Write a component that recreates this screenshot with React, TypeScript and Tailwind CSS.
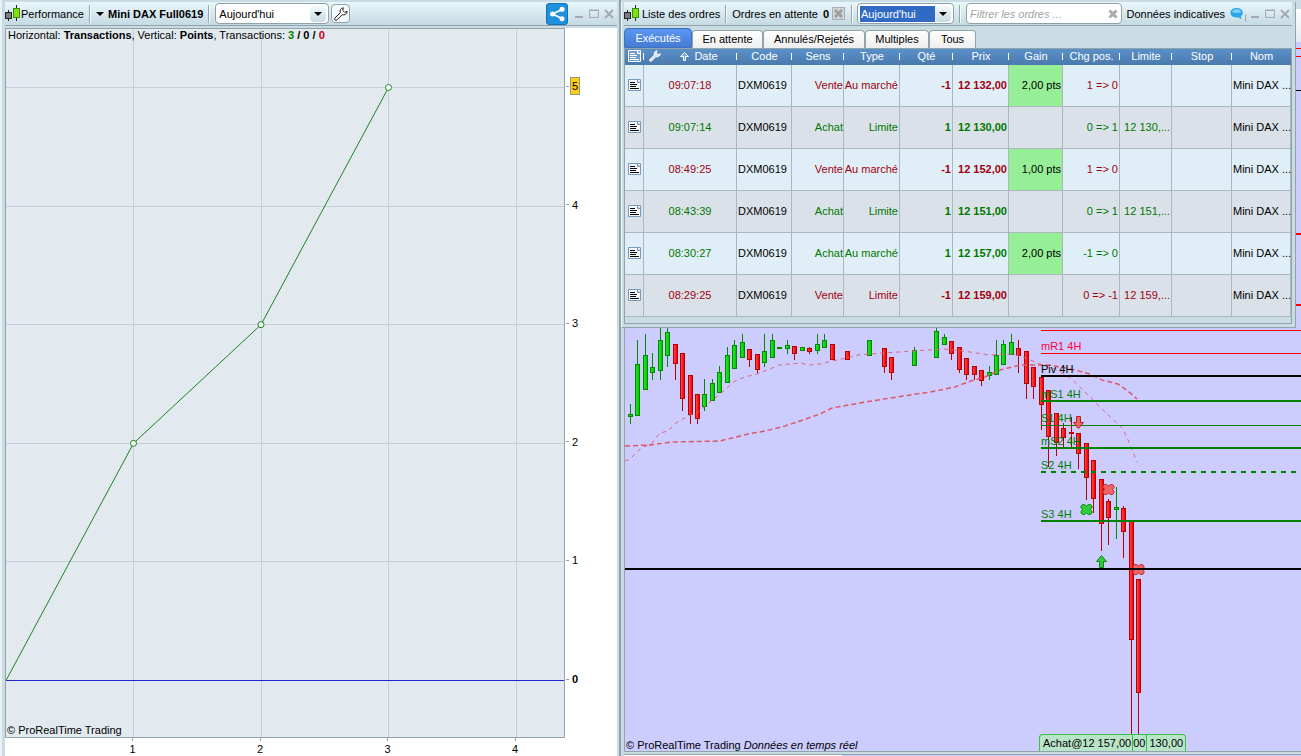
import React from "react";

type Candle = [x: number, high: number, top: number, bottom: number, low: number, up: 0 | 1];

const candles: Candle[] = [
  [630, 404, 414, 417, 424, 1],
  [637, 340, 364, 416, 416, 1],
  [645, 334, 355, 390, 390, 1],
  [652, 353, 367, 373, 380, 1],
  [660, 328, 340, 371, 380, 1],
  [667, 328, 332, 356, 367, 1],
  [675, 344, 344, 364, 380, 0],
  [682, 353, 353, 399, 411, 0],
  [690, 375, 375, 415, 424, 0],
  [697, 394, 394, 419, 424, 0],
  [704, 379, 394, 407, 411, 1],
  [712, 379, 383, 401, 401, 1],
  [719, 366, 372, 393, 393, 1],
  [727, 347, 355, 383, 383, 1],
  [734, 340, 345, 369, 369, 1],
  [742, 334, 342, 358, 358, 1],
  [749, 349, 349, 360, 367, 0],
  [757, 354, 354, 370, 373, 0],
  [764, 334, 351, 363, 367, 1],
  [772, 334, 340, 358, 358, 1],
  [779, 347, 347, 349, 349, 1],
  [787, 340, 345, 349, 354, 1],
  [794, 346, 346, 354, 360, 0],
  [802, 347, 347, 351, 351, 1],
  [809, 347, 348, 352, 354, 0],
  [817, 334, 344, 351, 354, 1],
  [824, 334, 340, 348, 348, 1],
  [832, 344, 344, 360, 360, 0],
  [847, 351, 351, 360, 360, 0],
  [869, 340, 340, 356, 356, 1],
  [884, 348, 348, 367, 373, 0],
  [891, 357, 357, 373, 380, 0],
  [914, 347, 350, 366, 366, 1],
  [936, 328, 331, 358, 358, 1],
  [944, 334, 337, 345, 345, 1],
  [951, 341, 341, 354, 360, 0],
  [959, 347, 347, 370, 373, 0],
  [966, 358, 358, 375, 380, 0],
  [974, 366, 366, 375, 380, 0],
  [981, 370, 370, 381, 386, 0],
  [989, 366, 372, 376, 380, 1],
  [996, 340, 355, 375, 375, 1],
  [1003, 340, 344, 365, 365, 1],
  [1011, 334, 342, 355, 355, 1],
  [1018, 340, 348, 356, 373, 0],
  [1026, 351, 351, 384, 399, 0],
  [1033, 367, 367, 387, 399, 0],
  [1041, 377, 377, 405, 430, 0],
  [1048, 390, 390, 437, 467, 0],
  [1056, 413, 413, 443, 456, 0],
  [1063, 423, 428, 438, 447, 0],
  [1071, 417, 432, 434, 447, 0],
  [1078, 433, 433, 454, 469, 0],
  [1086, 443, 443, 478, 500, 0],
  [1093, 460, 460, 499, 513, 0],
  [1101, 479, 479, 524, 551, 0],
  [1108, 499, 501, 518, 545, 0],
  [1116, 487, 507, 510, 539, 1],
  [1123, 506, 508, 532, 558, 0],
  [1131, 521, 521, 640, 735, 0],
  [1138, 579, 579, 693, 735, 0],
];

const fastAverage =
  "625,461 630,459 640,449 652,443 660,433 668,431 676,423 690,415 697,413 710,402 720,394 735,381 745,377 757,374 770,369 779,365 800,363 810,365 820,364 832,361 847,358 858,355 884,353 914,351 944,349 970,352 989,355 1011,354 1023,357 1040,364 1055,369 1070,378 1078,385 1093,400 1105,412 1118,424 1123,429 1129,442 1137,462";
const slowAverage =
  "625,446 650,445 672,442 720,441 748,434 765,431 785,426 800,421 820,414 832,408 860,403 890,398 930,392 955,387 968,382 985,377 1000,370 1020,365 1050,365 1075,370 1090,374 1102,380 1118,384 1128,391 1137,399";

const levels = [
  { name: "", y: 48, h: 1, color: "#ff0000" },
  { name: "", y: 56, h: 1, color: "#ff0000" },
  { name: "", y: 90, h: 1, color: "#000000" },
  { name: "", y: 233, h: 2, color: "#ff0000" },
  { name: "", y: 304, h: 2, color: "#ff0000" },
  { name: "", y: 330, h: 1, color: "#ff0000" },
  { name: "mR1 4H", y: 353, h: 1, color: "#ff0000", text: "#ff0040" },
  { name: "Piv 4H", y: 375, h: 2, color: "#000000" },
  { name: "mS1 4H", y: 400, h: 2, color: "#008000" },
  { name: "S1 4H", y: 425, h: 1, color: "#008000" },
  { name: "mS2 4H", y: 447, h: 2, color: "#008000" },
  { name: "S2 4H", y: 471, h: 2, color: "#008000", dashed: true },
  { name: "S3 4H", y: 520, h: 2, color: "#008000" },
];

const orders = [
  ["09:07:18", "Vente", "Au marché", "-1", "12 132,00", "2,00 pts", "1 => 0", ""],
  ["09:07:14", "Achat", "Limite", "1", "12 130,00", "", "0 => 1", "12 130,..."],
  ["08:49:25", "Vente", "Au marché", "-1", "12 152,00", "1,00 pts", "1 => 0", ""],
  ["08:43:39", "Achat", "Limite", "1", "12 151,00", "", "0 => 1", "12 151,..."],
  ["08:30:27", "Achat", "Au marché", "1", "12 157,00", "2,00 pts", "-1 => 0", ""],
  ["08:29:25", "Vente", "Limite", "-1", "12 159,00", "", "0 => -1", "12 159,..."],
];

function CandleIcon() {
  return (
    <svg width="15" height="17" viewBox="0 0 15 17" className="shrink-0" aria-hidden="true">
      <path d="M3.5 5v11M11.5 0v16" stroke="#222" />
      <rect x="0.5" y="7.500" width="6" height="6" fill="#777c80" stroke="#222" />
      <rect x="8.500" y="3.500" width="6" height="9" fill="#80e010" stroke="#3a8a10" />
    </svg>
  );
}

function Separator() {
  return <span className="h-[18px] w-[2px] shrink-0 border-l border-[#93a5ad] bg-[#f4fbfd]" />;
}

function Wrench({ color, fill, size }: { color: string; fill: string; size: number }) {
  return (
    <svg width={size} height={size} viewBox="0 0 14 14" aria-hidden="true">
      <path
        d="M9.300.8a3.700 3.700 0 0 0-3 5L1 10.900a1.400 1.400 0 0 0 2 2l5.200-5.200a3.700 3.700 0 0 0 5-3.400l-2.500 1.100-1.900-1.900Z"
        fill={fill}
        stroke={color}
        strokeLinejoin="round"
      />
    </svg>
  );
}

function WindowButtons() {
  const cls = "flex h-4 w-[15px] items-center justify-center";
  return (
    <span className="flex shrink-0">
      <button className={cls} aria-label="Réduire">
        <svg width="10" height="10"><path d="M1 8h8" stroke="#a3abaf" strokeWidth="2" /></svg>
      </button>
      <button className={cls} aria-label="Agrandir">
        <svg width="10" height="10"><path d="M.5 1.500h9v7h-9ZM0 1h10" fill="none" stroke="#a3abaf" /></svg>
      </button>
      <button className={cls} aria-label="Fermer">
        <svg width="10" height="10"><path d="M1 1l8 8M9 1L1 9" stroke="#a3abaf" strokeWidth="2" /></svg>
      </button>
    </span>
  );
}

function PeriodSelect({ selected, className }: { selected?: boolean; className: string }) {
  return (
    <span className={"flex h-[21px] shrink-0 items-center rounded border border-[#8fa0a8] bg-white p-[2px] " + className}>
      <select
        aria-label="Période"
        className={
          "h-4 min-w-0 flex-1 appearance-none outline-none " +
          (selected ? "bg-[#316ac5] pl-px text-white" : "bg-white pl-px text-black")
        }
      >
        <option>Aujourd'hui</option>
        <option>Hier</option>
      </select>
      <span className="pointer-events-none flex h-4 w-4 items-center justify-center rounded-sm bg-linear-to-b from-[#f3f9fb] to-[#c8dbe3]">
        <svg width="8" height="4"><path d="M0 0h8L4 4Z" fill="#000" /></svg>
      </span>
    </span>
  );
}

function DocIcon({ header }: { header?: boolean }) {
  const edge = header ? "#ffffff" : "#7898bd";
  return (
    <svg width="13" height="12" viewBox="0 0 13 12" className="mx-auto block" aria-label="Note" role="img">
      <path d="M.5.5h12v11H.5Z" fill={header ? "#6f9ccb" : "#f8fbff"} stroke={edge} />
      <path d="M9.500.5v3h3" fill="#b8cce2" stroke={edge} />
      <path d="M2 3.500h5M2 5.500h7M2 7.500h6M2 9.500h9" stroke={header ? "#fff" : "#000"} />
    </svg>
  );
}

function PerformanceChart() {
  const yValues = [5, 4, 3, 2, 1, 0];
  const yAt = (v: number) => 651.5 - v * 118.6;
  const xAt = (v: number) => v * 127.5;
  const points = [[0, 0], [1, 2], [2, 3], [3, 5]];
  return (
    <div className="grid min-h-0 flex-1 grid-cols-[1fr_52px] grid-rows-[1fr_18px] bg-white">
      <div className="relative border border-[#92a4ab] bg-[#e2eaf0]">
        <svg className="absolute inset-0 h-full w-full" viewBox="0 0 558 708" preserveAspectRatio="none" aria-label="Performance en points">
          {[1, 2, 3, 4].map((v) => (
            <path key={v} d={`M${Math.floor(xAt(v)) + 0.5} 0V708`} stroke="#c3d1d6" />
          ))}
          {[1, 2, 3, 4, 5].map((v) => (
            <path key={v} d={`M0 ${Math.floor(yAt(v)) + 0.5}H558`} stroke="#c3d1d6" />
          ))}
          <path d="M0 651.5H558" stroke="#2424d6" />
          <polyline points={points.map(([x, y]) => `${xAt(x)},${yAt(y)}`).join(" ")} fill="none" stroke="#1c8420" />
          {points.slice(1).map(([x, y]) => (
            <circle key={x} cx={xAt(x)} cy={yAt(y)} r="3" fill="#fff" stroke="#1c8420" />
          ))}
        </svg>
        <div className="relative pl-[2px] leading-[13px]">
          Horizontal: <b>Transactions</b>, Vertical: <b>Points</b>, Transactions:{" "}
          <b><span className="text-[#008000]">3</span> / 0 / <span className="text-[#c00020]">0</span></b>
        </div>
        <div className="absolute bottom-0 left-px leading-[13px]">© ProRealTime Trading</div>
      </div>
      <div className="relative">
        {yValues.map((v) => (
          <div
            key={v}
            className="absolute left-px flex -translate-y-1/2 items-center gap-px leading-4"
            style={{ top: `${((yAt(v) - 0.5) / 710) * 100}%` }}
          >
            <span className="h-px w-[3px] bg-[#92a4ab]" />
            <span className={v === 5 ? "border border-[#8c9a80] bg-[#ffcc10] px-px" : v === 0 ? "px-[2px] font-bold" : "px-[2px]"}>{v}</span>
          </div>
        ))}
      </div>
      <div className="relative">
        {[1, 2, 3, 4].map((v) => (
          <div
            key={v}
            className="absolute top-0 flex -translate-x-1/2 flex-col items-center leading-4"
            style={{ left: `${(xAt(v) / 560) * 100}%` }}
          >
            <span className="h-[3px] w-px bg-[#92a4ab]" />
            {v}
          </div>
        ))}
      </div>
    </div>
  );
}

function PerformancePanel() {
  return (
    <section className="flex min-w-0 flex-col border-x-2 border-l-[#e9f1f4] border-r-[#8fa3ab] bg-[#c9dbe3] pt-[2px] pr-[2px] pl-[3px]">
      <header className="mb-[2px] flex h-6 items-center border-b border-[#92a4ab] bg-linear-to-b from-[#e8f7fb] to-[#c6dae3] pr-px whitespace-nowrap">
        <CandleIcon />
        <span className="ml-px">Performance</span>
        <span className="ml-[5px] flex"><Separator /></span>
        <button className="ml-[5px] flex items-center gap-1 font-bold">
          <svg width="8" height="4"><path d="M0 0h8L4 4Z" fill="#000" /></svg>
          Mini DAX Full0619
        </button>
        <span className="mx-[5px] flex"><Separator /></span>
        <PeriodSelect className="w-[114px]" />
        <button aria-label="Réglages" className="ml-[2px] flex h-[19px] w-[19px] items-center justify-center rounded-sm border border-[#8fa0a8] bg-[#f4f8fa]">
          <Wrench color="#222" fill="#fff" size={14} />
        </button>
        <button aria-label="Partager" className="ml-auto flex h-[22px] w-[22px] items-center justify-center rounded-[3px] border border-[#1572b8] bg-[#1e90dc]">
          <svg width="16" height="16" viewBox="0 0 16 16">
            <path d="M13 3.500L3.500 8l9.500 4.500" fill="none" stroke="#fff" strokeWidth="1.800" />
            <circle cx="3.500" cy="8" r="2.500" fill="#fff" />
            <circle cx="13" cy="3.200" r="2.500" fill="#fff" />
            <circle cx="13" cy="12.800" r="2.500" fill="#fff" />
          </svg>
        </button>
        <span className="ml-[3px] flex"><WindowButtons /></span>
      </header>
      <PerformanceChart />
    </section>
  );
}

function Cross({ x, y, fill, stroke }: { x: number; y: number; fill: string; stroke: string }) {
  return (
    <path
      transform={`translate(${x + 0.5} ${y + 0.5})`}
      d="M-4-5h2L0-3.500 2-5h2l1.500 1.500v1.500L4 0l1.500 2v1.500L4 5H2L0 3.500-2 5h-2l-1.500-1.500V2L-4 0l-1.500-2v-1.500Z"
      fill={fill}
      stroke={stroke}
    />
  );
}

function MarketChart() {
  return (
    <div className="relative min-h-0 flex-1 overflow-hidden border-b border-l border-[#92a4ab] bg-[#ccccff]">
      <svg className="absolute inset-0 h-full w-full" aria-label="Mini DAX">
        <defs>
          <linearGradient id="down">
            <stop offset="0" stopColor="#ff4848" />
            <stop offset="1" stopColor="#f00000" />
          </linearGradient>
          <linearGradient id="up">
            <stop offset="0" stopColor="#28e428" />
            <stop offset="1" stopColor="#00c800" />
          </linearGradient>
        </defs>
        <svg x="-625" y="-42" width="100%" height="100%" overflow="visible">
          {candles.map(([x, high, top, bottom, low, up]) => {
            const stroke = up ? "#008a00" : "#b80000";
            const h = bottom - top;
            return (
              <g key={x}>
                <rect x={x} y={high} width="1" height={low - high} fill={stroke} />
                <rect x={x - 2} y={top} width="5" height={h} fill={stroke} />
                {h > 2 && <rect x={x - 1} y={top + 1} width="3" height={h - 2} fill={up ? "url(#up)" : "url(#down)"} />}
              </g>
            );
          })}
          <polyline points={fastAverage} fill="none" stroke="#dc6878" strokeDasharray="4 4" />
          <polyline points={slowAverage} fill="none" stroke="#dc5a64" strokeWidth="1.500" strokeDasharray="5 3" />
          {levels.map((l) => (
            <g key={l.y}>
              {l.dashed ? (
                <path d={`M1041 ${l.y + 1}H1297`} stroke={l.color} strokeWidth="2" strokeDasharray="5 5" />
              ) : (
                <rect x="1041" y={l.y} width="2000" height={l.h} fill={l.color} />
              )}
              <text x="1041" y={l.y + l.h - 4} fill={l.text ?? l.color}>{l.name}</text>
            </g>
          ))}
          <path d="M1076.500 416.500h4v6h3l-5 6-5-6h3Z" fill="#f06464" stroke="#b42020" />
          <path d="M1099.500 567.500h4v-6h3l-5-6-5 6h3Z" fill="#30cc38" stroke="#108818" />
          <Cross x={1108} y={489} fill="#f06464" stroke="#b82830" />
          <Cross x={1086} y={509} fill="#30cc38" stroke="#108818" />
          <Cross x={1138} y={569} fill="#f06464" stroke="#b82830" />
          <rect x="625" y="568" width="2400" height="2" fill="#000" />
        </svg>
      </svg>
      <div className="absolute bottom-0 left-px leading-3">
        © ProRealTime Trading <i>Données en temps réel</i>
      </div>
      <div className="absolute bottom-0 left-[414px] flex h-[17px] items-center rounded-t border border-b-0 border-[#38c048] bg-[#b8e4c8] whitespace-nowrap">
        <span className="border-r border-[#38c048] pr-px pl-[3px] leading-4">Achat@12 157,00</span>
        <span className="border-r border-[#38c048] pr-px leading-4">00</span>
        <span className="px-[2px] leading-4">130,00</span>
      </div>
    </div>
  );
}

const tabs = [
  { name: "Exécutés", cls: "w-[68px]" },
  { name: "En attente", cls: "w-[71px]" },
  { name: "Annulés/Rejetés", cls: "w-[102px]" },
  { name: "Multiples", cls: "w-[64px]" },
  { name: "Tous", cls: "w-[47px]" },
];

const columnWidths = [19, 93, 55, 52, 56, 53, 56, 54, 57, 52, 60, 59];

function OrdersTable() {
  const cell = "border-r border-b border-[#aab8be] pb-px leading-4 whitespace-nowrap ";
  const tick = "relative after:absolute after:top-1 after:right-0 after:h-[7px] after:w-px after:bg-white";
  return (
    <table className="w-full table-fixed border-separate border-spacing-0">
      <colgroup>
        {columnWidths.map((w, i) => (
          <col key={i} style={{ width: `${(w / 666) * 100}%` }} />
        ))}
      </colgroup>
      <thead>
        <tr className="h-4 bg-linear-to-b from-[#5a90c8] to-[#4a7aae] leading-[14px] text-white">
          <th className={tick + " p-0 pb-[2px]"}><DocIcon header /></th>
          <th className={tick + " p-0 pb-[2px] font-normal"}>
            <span className="flex items-center">
              <span className="pl-[5px]"><Wrench color="#fff" fill="#dbe8f4" size={12} /></span>
              <span className="flex flex-1 items-center justify-center gap-[5px]">
                <svg width="9" height="9"><path d="M3.500 8.500h2v-4h3l-4-4-4 4h3Z" fill="#7fa8d4" stroke="#fff" /></svg>
                Date
              </span>
            </span>
          </th>
          {["Code", "Sens", "Type", "Qté", "Prix", "Gain", "Chg pos.", "Limite", "Stop"].map((h) => (
            <th key={h} className={tick + " p-0 pb-[2px] font-normal"}>{h}</th>
          ))}
          <th className="p-0 pb-[2px] font-normal">Nom</th>
        </tr>
      </thead>
      <tbody>
        {orders.map(([time, side, type, qty, price, gain, change, limit], i) => {
          const tone = side === "Achat" ? "text-[#007800] " : "text-[#a00010] ";
          return (
            <tr key={time} className={"h-[42px] " + (i % 2 ? "bg-[#dbe1e8]" : "bg-[#e0eff7]")}>
              <td className={cell}><DocIcon /></td>
              <td className={cell + tone + "text-center"}>{time}</td>
              <td className={cell + "pl-px"}>DXM0619</td>
              <td className={cell + tone + "text-right"}>{side}</td>
              <td className={cell + tone + "pr-px text-right"}>{type}</td>
              <td className={cell + tone + "pr-px text-right font-bold"}>{qty}</td>
              <td className={cell + tone + "pr-px text-right font-bold"}>{price}</td>
              <td className={cell + "pr-px text-right " + (gain ? "bg-[#96ee96]" : "")}>{gain}</td>
              <td className={cell + tone + "pr-px text-right"}>{change}</td>
              <td className={cell + tone + "pr-px text-right"}>{limit}</td>
              <td className={cell} />
              <td className={cell + "pl-px"}>Mini DAX ...</td>
            </tr>
          );
        })}
      </tbody>
    </table>
  );
}

function OrdersWindow() {
  return (
    <section className="absolute inset-x-0 top-[2px] mr-[5px] border-r border-b border-l border-[#92a4ab] border-l-[#f4f8fa] bg-[#c9dbe3] pr-[3px] pb-[3px] pl-[2px]">
      <header className="mb-[2px] flex h-6 items-center border-b border-[#92a4ab] bg-linear-to-b from-[#e8f7fb] to-[#c6dae3] whitespace-nowrap">
        <CandleIcon />
        <span className="ml-[3px]">Liste des ordres</span>
        <span className="mx-[5px] flex"><Separator /></span>
        <span>Ordres en attente</span>
        <b className="ml-[5px]">0</b>
        <button aria-label="Annuler les ordres" className="mr-[6px] ml-[3px] flex h-[13px] w-[13px] items-center justify-center border border-[#a8afb2] bg-[#d4d6d6]">
          <svg width="9" height="9"><path d="M1 1l7 7M8 1L1 8" stroke="#9a9fa2" strokeWidth="3" /></svg>
        </button>
        <span className="mr-1 flex"><Separator /></span>
        <PeriodSelect selected className="w-[97px]" />
        <span className="mx-[5px] flex"><Separator /></span>
        <span className="flex h-[21px] min-w-0 flex-1 items-center rounded border border-[#8fa0a8] bg-white px-[3px]">
          <input aria-label="Filtrer les ordres" placeholder="Filtrer les ordres ..." className="min-w-0 flex-1 bg-transparent italic outline-none placeholder:text-[#a0a4a6]" />
          <svg width="10" height="10"><path d="M1.500 1.500l7 7M8.500 1.500l-7 7" stroke="#a9abac" strokeWidth="3" /></svg>
        </span>
        <span className="mx-[5px]">Données indicatives</span>
        <svg width="17" height="16" viewBox="0 0 17 16" className="shrink-0" aria-hidden="true">
          <path d="M6.500 2C3 2 .5 4 .5 6.800s2.500 4.700 6 4.700c.8 0 1.500 0 2.200-.3.6 1 1.600 1.600 3 1.800-.7-.8-.9-1.700-.8-2.600C12 9.500 12.800 8.300 12.800 6.800 12.800 4 10 2 6.500 2Z" fill="#28a4e8" />
          <path d="M2 6c.5-2 2.500-3 4.500-3s4 1 4.800 3c-2 1.200-7 1.200-9.300 0Z" fill="#7cd0fa" />
          <path d="M16.500 8.500c-1.500 0-1 1.500-1 2.500s.5 1-.5 1c1 0 .5 1 .5 2s0 1.500 1 1.500" fill="none" stroke="#98a2a8" />
        </svg>
        <WindowButtons />
      </header>
      <nav className="flex h-5" role="tablist">
        {tabs.map((t, i) => (
          <button
            key={t.name}
            role="tab"
            aria-selected={i === 0}
            className={
              t.cls +
              (i === 0
                ? " rounded-t border border-[#3f72c0] bg-linear-to-b from-[#5c96f0] to-[#447cd6] text-white"
                : " mt-[2px] rounded-t border border-b-0 border-[#92a4ab] bg-linear-to-b from-white to-[#eeeeee] pb-[2px] text-black")
            }
          >
            {t.name}
          </button>
        ))}
      </nav>
      <div className="border border-[#92a4ab] pb-[6px]">
        <OrdersTable />
      </div>
    </section>
  );
}

export default function App() {
  return (
    <main className="grid h-screen grid-cols-[621fr_680fr] overflow-hidden bg-[#c9dbe3] font-['Liberation_Sans',Arial,sans-serif] text-[11px] leading-4 text-black">
      <PerformancePanel />
      <div className="relative flex min-w-0 flex-col">
        <section className="flex min-h-0 flex-1 flex-col pl-[3px]">
          <div className="mt-[9px] h-[33px] shrink-0 bg-linear-to-b from-white to-[#e2eaf0]" />
          <MarketChart />
          <div className="mt-[2px] flex h-[2px] shrink-0 border-t border-[#92a4ab]">
            <span className="w-[218px] bg-white" />
            <span className="flex-1 bg-[#ccccff]" />
          </div>
        </section>
        <OrdersWindow />
      </div>
    </main>
  );
}
